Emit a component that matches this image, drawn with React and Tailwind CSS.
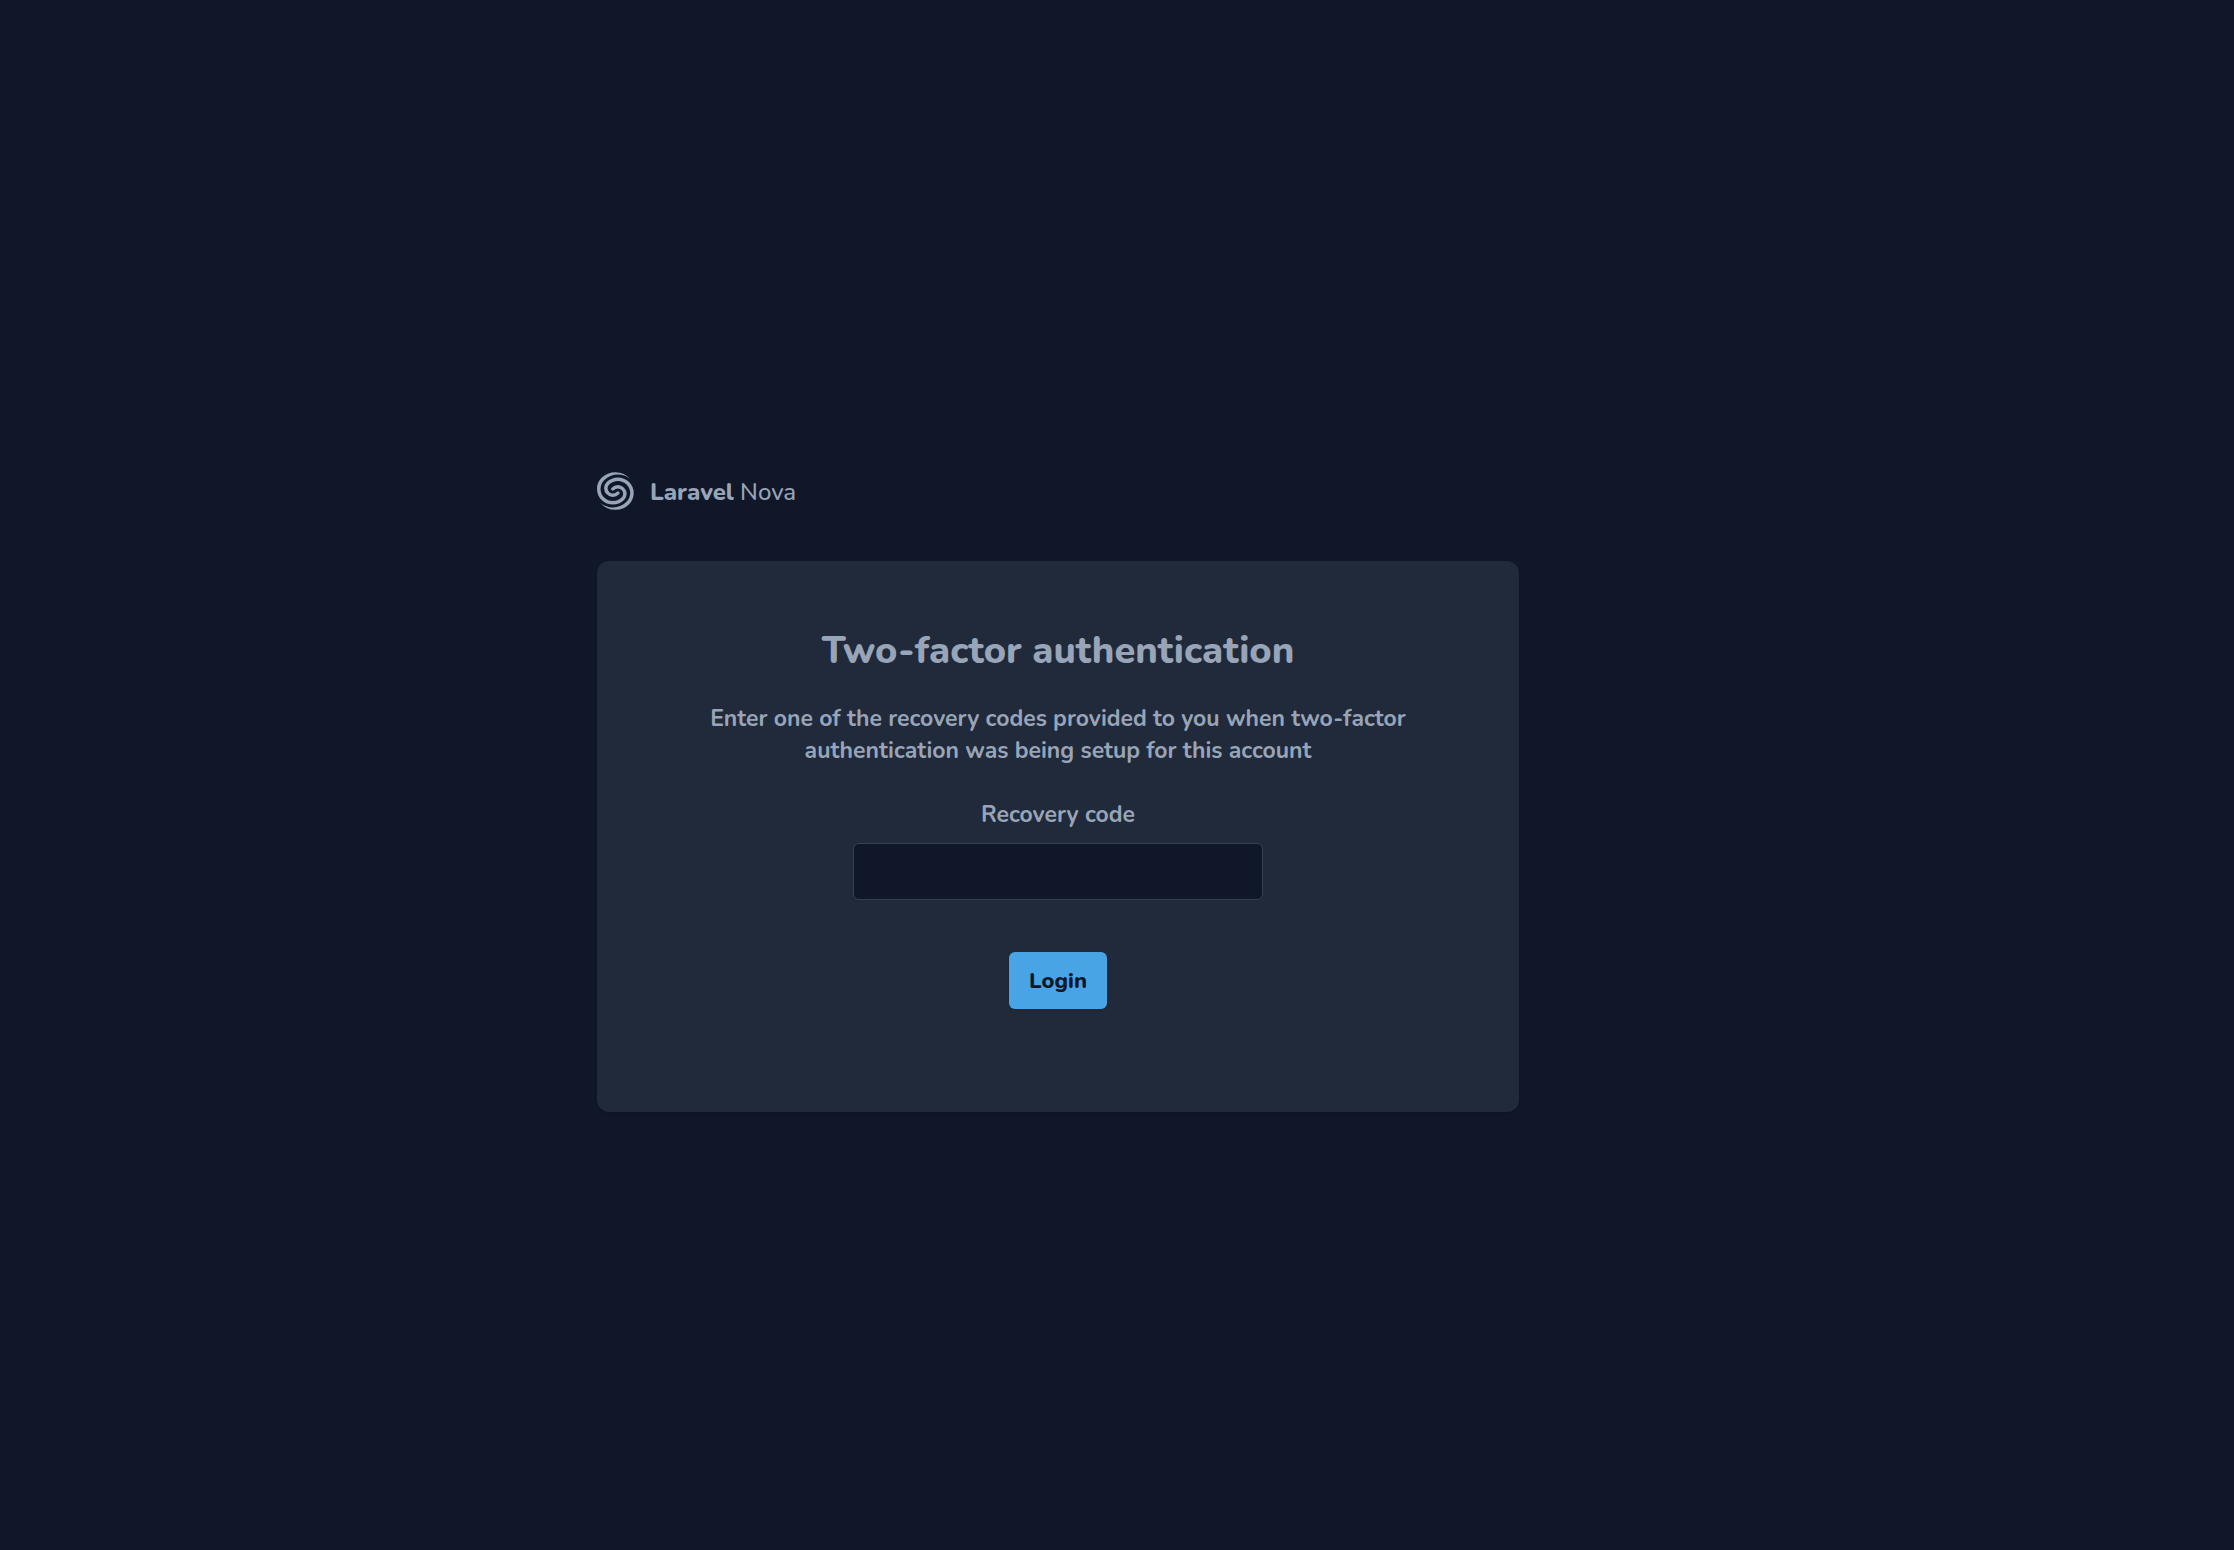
function NovaMark() {
  return (
    <svg viewBox="0 0.6 35 35.8" className="h-[38px] w-[37px]" fill="currentColor" aria-hidden="true">
      <path d="M30.343 9.99a14.757 14.757 0 0 1 .046 20.972 18.383 18.383 0 0 1-13.019 5.365A18.382 18.382 0 0 1 3.272 29.79c7.209 5.955 17.945 5.581 24.713-1.118a11.477 11.477 0 0 0 0-16.345c-4.56-4.514-11.953-4.514-16.513 0a4.918 4.918 0 0 0 0 7.005 5.04 5.04 0 0 0 7.077 0 1.68 1.68 0 0 1 2.359 0 1.639 1.639 0 0 1 0 2.333 8.4 8.4 0 0 1-11.794 0 8.198 8.198 0 0 1-.002-11.671c5.861-5.802 15.367-5.802 21.228 0zM17.37.674a18.383 18.383 0 0 1 14.097 6.537C24.258 1.256 13.523 1.63 6.755 8.329a11.478 11.478 0 0 0 0 16.346c4.56 4.513 11.953 4.513 16.512 0a4.917 4.917 0 0 0 0-7.005 5.04 5.04 0 0 0-7.077 0 1.68 1.68 0 0 1-2.358 0 1.639 1.639 0 0 1 0-2.334 8.4 8.4 0 0 1 11.794 0 8.198 8.198 0 0 1 0 11.672c-5.862 5.801-15.367 5.801-21.228 0A14.756 14.756 0 0 1 4.35 6.038 18.382 18.382 0 0 1 17.37.674z" />
    </svg>
  );
}

export default function App() {
  return (
    <div className="flex min-h-screen items-center justify-center bg-[#101728] pr-[118px] pb-[34px] pt-[68px] font-[Nunito,'Noto_Sans',sans-serif] text-[23px] leading-8 text-[#98a4b8]">
      <main className="w-full max-w-[922px]">
        <header className="mb-[51px] flex items-center gap-4 text-2xl">
          <NovaMark />
          <p className="pt-0.5 font-medium">
            <span className="font-extrabold">Laravel</span> Nova
          </p>
        </header>

        <form
          className="flex flex-col items-center rounded-[12px] bg-[#202a3a] px-8 pt-16 pb-[103px] text-center font-bold shadow-sm"
          onSubmit={(event) => event.preventDefault()}
        >
          <h1 className="mb-[27px] text-[38px] leading-[51px] font-extrabold">Two-factor authentication</h1>
          <p className="mb-8 max-w-[720px]">
            Enter one of the recovery codes provided to you when two-factor authentication was being setup for this account
          </p>
          <label htmlFor="recovery_code" className="mb-3">
            Recovery code
          </label>
          <input
            id="recovery_code"
            name="recovery_code"
            type="text"
            autoComplete="one-time-code"
            className="mb-[52px] h-[57px] w-full max-w-[410px] rounded-[6px] border border-[#354153] bg-[#101728] px-4 outline-none"
          />
          <button type="submit" className="h-[57px] rounded-[6px] bg-[#48a4e4] px-5 text-[22px] font-extrabold text-[#101728] shadow-sm">
            Login
          </button>
        </form>
      </main>
    </div>
  );
}
